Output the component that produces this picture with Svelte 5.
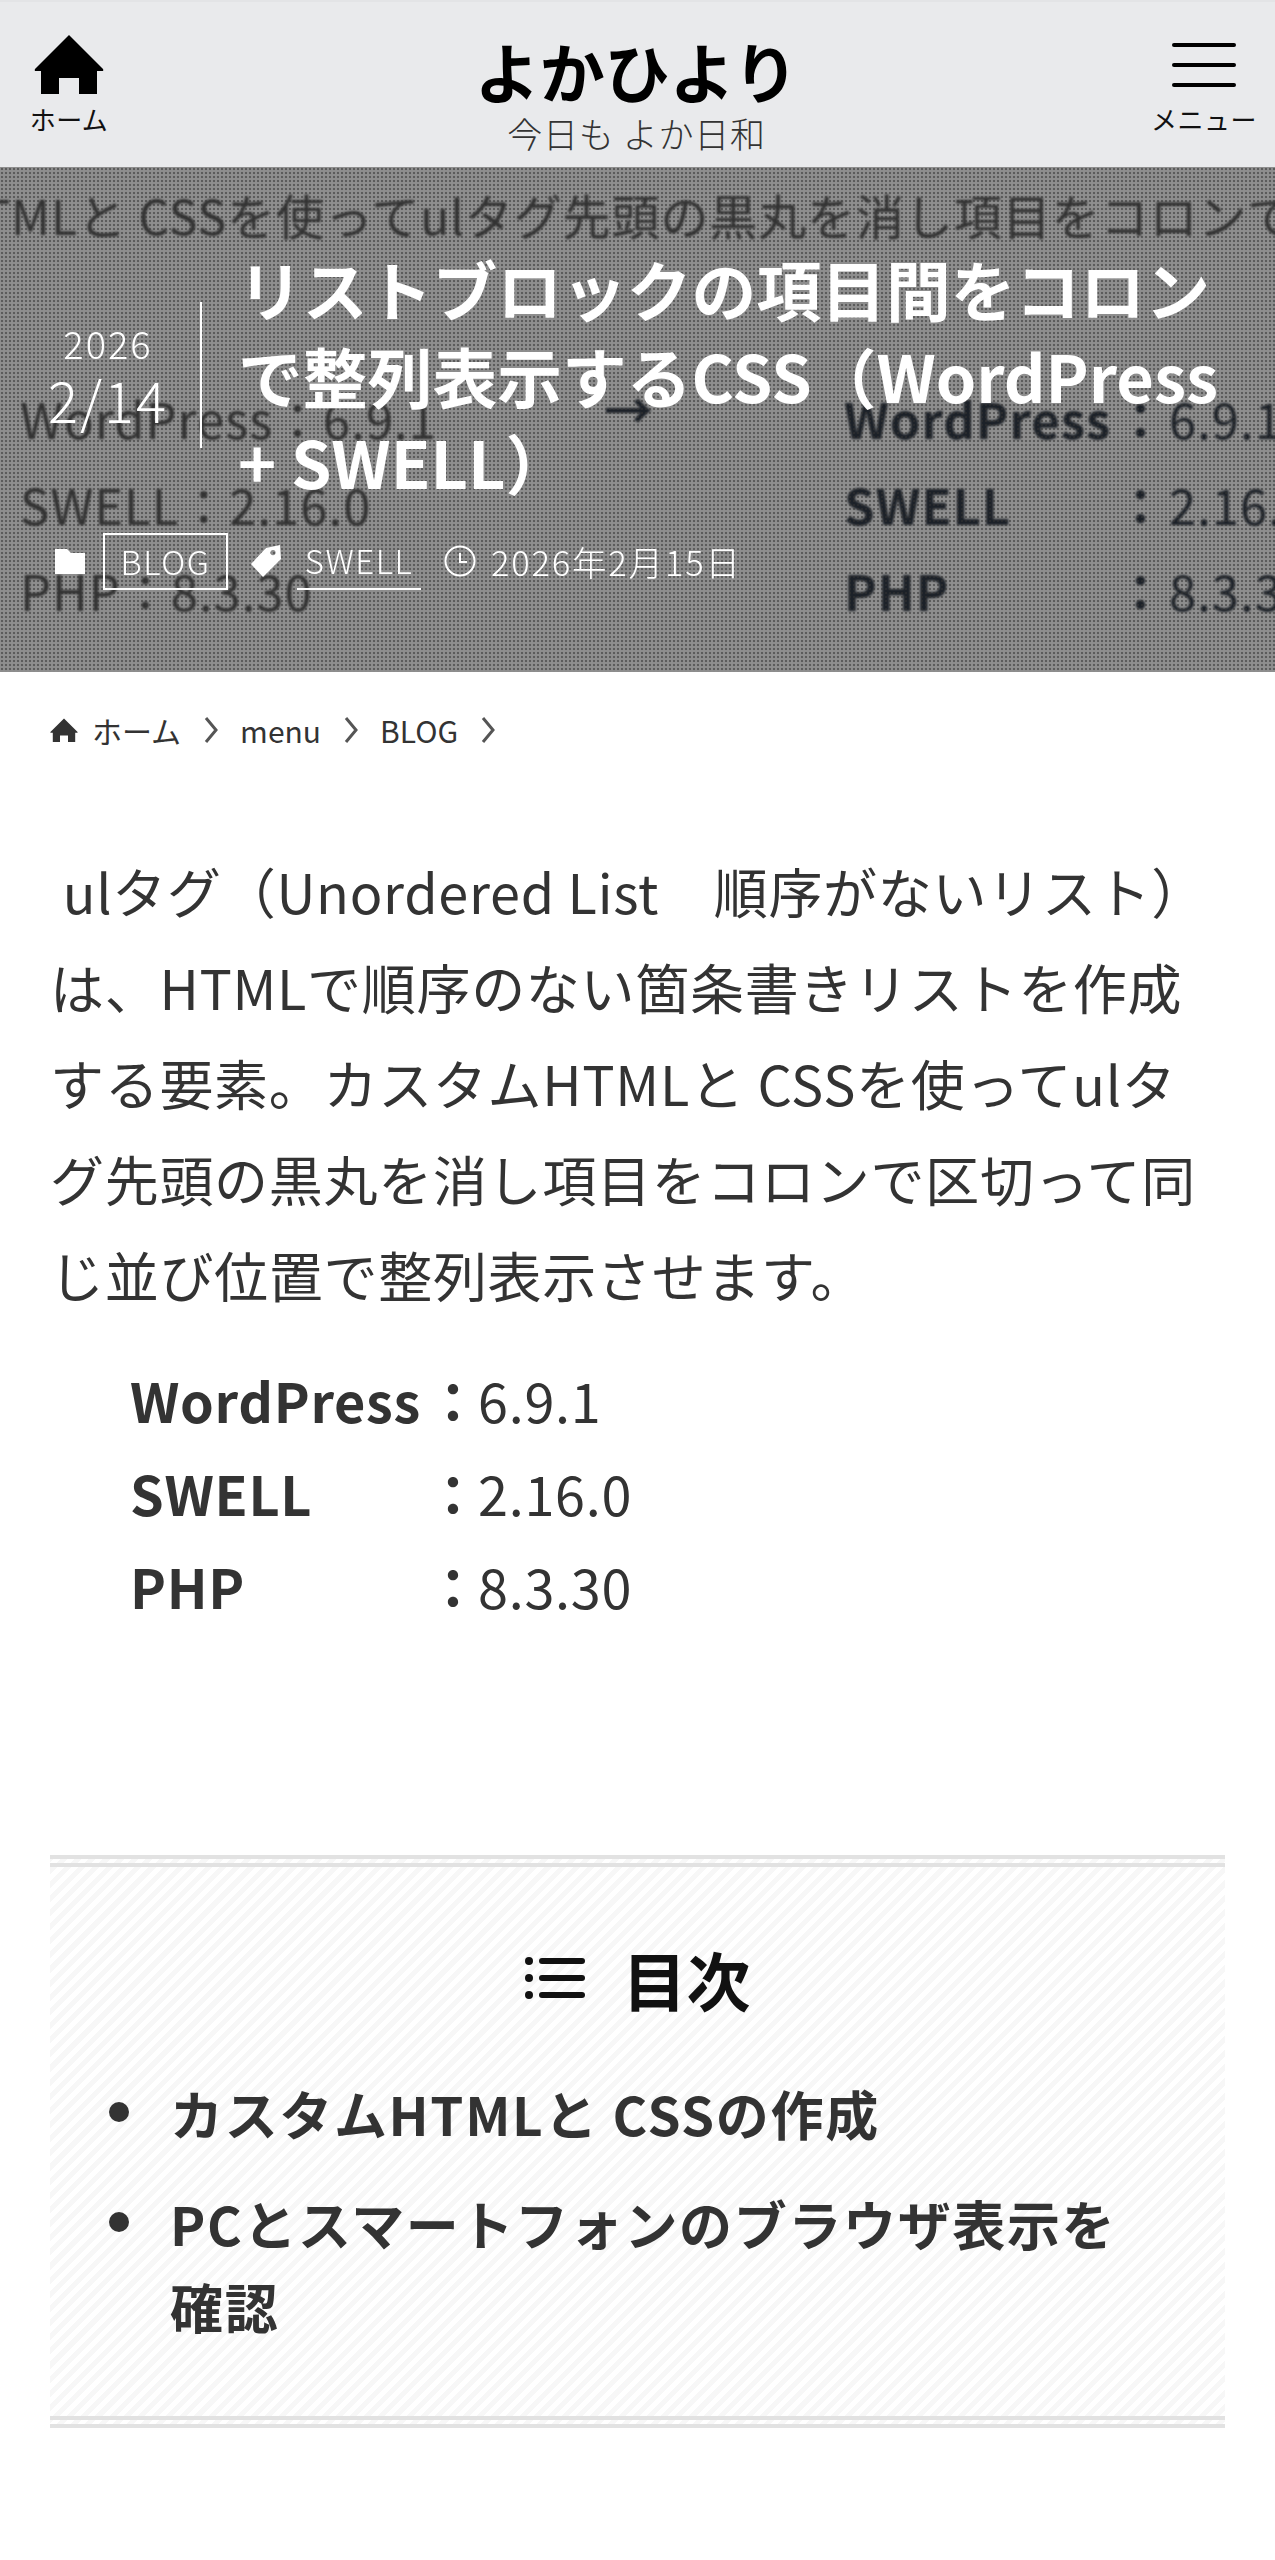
<script>
  const crumbs = ['menu', 'BLOG'];
  const specs = [
    ['WordPress', '6.9.1'],
    ['SWELL', '2.16.0'],
    ['PHP', '8.3.30']
  ];
  const toc = ['カスタムHTMLと CSSの作成', 'PCとスマートフォンのブラウザ表示を確認'];
</script>

<div class="page">
  <header class="site-head">
    <a class="head-btn home">
      <svg class="home-icon" viewBox="0 0 70 60"><path d="M35 1 L69 35 Q70 37 68 37 L63 37 L63 60 L45 60 L45 44 L25 44 L25 60 L7 60 L7 37 L2 37 Q0 37 1 35 Z" /></svg>
      <span>ホーム</span>
    </a>
    <div class="brand">
      <div class="brand-name">よかひより</div>
      <div class="brand-sub">今日も よか日和</div>
    </div>
    <a class="head-btn menu">
      <span class="burger"><i></i><i></i><i></i></span>
      <span>メニュー</span>
    </a>
  </header>

  <section class="hero">
    <div class="hero-shot" aria-hidden="true">
      <div class="shot-line">カスタムHTMLと CSSを使ってulタグ先頭の黒丸を消し項目をコロンで区切って</div>
      <div class="shot-list plain">
        <div>WordPress：6.9.1</div>
        <div>SWELL：2.16.0</div>
        <div>PHP：8.3.30</div>
      </div>
      <div class="shot-arrow">→</div>
      <div class="shot-list table">
        {#each specs as [k, v]}
          <div class="shot-row"><b>{k}</b><span class="shot-colon">：</span><span>{v}</span></div>
        {/each}
      </div>
    </div>
    <div class="hero-body">
      <div class="hero-main">
        <div class="date">
          <div class="year">2026</div>
          <div class="day">2/14</div>
        </div>
        <h1>リストブロックの項目間をコロンで整列表示するCSS（WordPress + SWELL）</h1>
      </div>
      <div class="meta">
        <svg class="folder" viewBox="0 0 30 25"><path d="M0 0 H12 L16 4 H30 V25 H0 Z" /></svg>
        <a class="cat">BLOG</a>
        <svg class="tag" viewBox="0 0 30 32"><path d="M15 3 L29 0 L30 14 L12 32 L0 19 Z M22 5 a2.6 2.6 0 1 0 .01 0 Z" fill-rule="evenodd" /></svg>
        <a class="tagname">SWELL</a>
        <svg class="clock" viewBox="0 0 32 32"><circle cx="16" cy="16" r="14.5" /><path d="M16 8 V17 H23" /></svg>
        <span class="pub">2026年2月15日</span>
      </div>
    </div>
  </section>

  <nav class="crumbs">
    <svg class="crumb-home" viewBox="0 0 70 60"><path d="M35 1 L69 35 Q70 37 68 37 L63 37 L63 60 L45 60 L45 44 L25 44 L25 60 L7 60 L7 37 L2 37 Q0 37 1 35 Z" /></svg>
    <span>ホーム</span>
    <svg class="chev" viewBox="0 0 14 28"><path d="M2 2 L12 14 L2 26" /></svg>
    {#each crumbs as c}
      <span>{c}</span>
      <svg class="chev" viewBox="0 0 14 28"><path d="M2 2 L12 14 L2 26" /></svg>
    {/each}
  </nav>

  <main class="content">
    <p class="lead">&nbsp;ulタグ（Unordered List　順序がないリスト）は、HTMLで順序のない箇条書きリストを作成する要素。カスタムHTMLと CSSを使ってulタグ先頭の黒丸を消し項目をコロンで区切って同じ並び位置で整列表示させます。</p>

    <ul class="specs">
      {#each specs as [k, v]}
        <li><b>{k}</b><span class="colon">：</span><span>{v}</span></li>
      {/each}
    </ul>

    <div class="toc">
      <div class="toc-title">
        <svg viewBox="0 0 60 44"><circle cx="4" cy="5" r="4" /><circle cx="4" cy="22" r="4" /><circle cx="4" cy="39" r="4" /><rect x="14" y="2" width="46" height="6" rx="3" /><rect x="14" y="19" width="46" height="6" rx="3" /><rect x="14" y="36" width="46" height="6" rx="3" /></svg>
        <span>目次</span>
      </div>
      <ul>
        {#each toc as item}
          <li>{item}</li>
        {/each}
      </ul>
    </div>
  </main>
</div>

<style>
  :global(body) {
    margin: 0;
    background: #fff;
    font-family: "Noto Sans CJK JP", "Noto Sans", sans-serif;
    color: #333;
  }

  .page {
    width: 1275px;
    overflow: hidden;
  }

  .site-head {
    height: 167px;
    box-sizing: border-box;
    background: #e9eaec;
    border-top: 2px solid #e3e4e6;
    display: flex;
    justify-content: space-between;
    align-items: flex-start;
  }

  .head-btn {
    display: flex;
    flex-direction: column;
    align-items: center;
    color: #111;
    font-size: 26px;
    letter-spacing: 0.5px;
    line-height: 1;
    width: 130px;
  }

  .head-btn span:last-child {
    white-space: nowrap;
  }

  .home {
    padding-top: 32px;
    margin-left: 4px;
  }

  .home-icon {
    width: 70px;
    height: 60px;
    fill: #000;
    margin-bottom: 12px;
  }

  .menu {
    padding-top: 41px;
    margin-right: 6px;
  }

  .burger {
    display: flex;
    flex-direction: column;
    gap: 16px;
    margin-bottom: 19px;
  }

  .burger i {
    display: block;
    width: 64px;
    height: 4px;
    border-radius: 2px;
    background: #000;
  }

  .brand {
    text-align: center;
    padding-top: 27px;
  }

  .brand-name {
    font-size: 65px;
    font-weight: 700;
    line-height: 82px;
    color: #000;
  }

  .brand-sub {
    font-size: 35px;
    font-weight: 300;
    letter-spacing: 0.7px;
    line-height: 44px;
    color: #333;
  }

  .hero {
    position: relative;
    height: 505px;
    background: #8e8e8e;
    overflow: hidden;
  }

  .hero-shot {
    position: absolute;
    inset: 0;
    color: #1c2128;
    font-size: 49px;
    filter: blur(1.2px);
  }

  .shot-line {
    position: absolute;
    left: -250px;
    top: 15px;
    white-space: nowrap;
    line-height: 64px;
    font-size: 48px;
    letter-spacing: 0.9px;
    color: #333;
  }

  .shot-list {
    position: absolute;
    top: 208px;
    line-height: 86px;
    white-space: nowrap;
    letter-spacing: 1px;
  }

  .plain {
    left: 20px;
    color: #333;
  }

  .table {
    left: 844px;
  }

  .shot-row {
    display: flex;
  }

  .shot-row b {
    width: 272px;
  }

  .shot-colon {
    font-weight: 700;
    width: 53px;
  }

  .shot-arrow {
    position: absolute;
    left: 604px;
    top: 198px;
    font-weight: 700;
    line-height: 86px;
  }

  .hero::after {
    content: '';
    position: absolute;
    inset: 0;
    background-image: radial-gradient(circle at 2px 2px, rgba(50, 50, 50, 0.55) 1.1px, transparent 1.6px);
    background-size: 4px 4px;
  }

  .hero-body {
    position: relative;
    z-index: 1;
    padding: 78px 30px 0 16px;
    color: #fff;
  }

  .hero-main {
    display: flex;
    align-items: center;
  }

  .date {
    width: 184px;
    height: 146px;
    flex: none;
    text-align: center;
    border-right: 2px solid #fff;
    font-weight: 300;
  }

  .year {
    font-size: 38px;
    letter-spacing: 2px;
    line-height: 50px;
    margin-top: 16px;
  }

  .day {
    font-size: 56px;
    letter-spacing: 2px;
    line-height: 62px;
  }

  h1 {
    margin: 0;
    font-size: 64.8px;
    line-height: 86.5px;
    font-weight: 700;
    padding-left: 36px;
  }

  .meta {
    display: flex;
    align-items: center;
    font-size: 33px;
    letter-spacing: 1.5px;
    font-weight: 300;
    margin-top: 28px;
    padding-left: 39px;
  }

  .folder {
    width: 30px;
    height: 25px;
    fill: #fff;
    margin-right: 18px;
  }

  .cat {
    width: 125px;
    box-sizing: border-box;
    text-align: center;
    border: 2px solid #fff;
    line-height: 53px;
    margin-right: 23px;
  }

  .tag {
    width: 30px;
    height: 32px;
    fill: #fff;
    margin-right: 16px;
  }

  .tagname {
    width: 124px;
    box-sizing: border-box;
    text-align: center;
    border-bottom: 2px solid #fff;
    line-height: 55px;
    margin-right: 23px;
  }

  .clock {
    width: 32px;
    height: 32px;
    fill: none;
    stroke: #fff;
    stroke-width: 2;
    margin-right: 15px;
  }

  .pub {
    font-size: 34.5px;
    letter-spacing: 1.8px;
  }

  .crumbs {
    display: flex;
    align-items: center;
    padding: 0 50px;
    height: 116px;
    font-size: 30px;
    color: #333;
  }

  .crumb-home {
    width: 28px;
    height: 24px;
    fill: #333;
    margin-right: 14px;
  }

  .chev {
    width: 14px;
    height: 28px;
    fill: none;
    stroke: #555;
    stroke-width: 3;
    margin: 0 22px 0 23px;
  }

  .content {
    padding: 0 50px;
  }

  .lead {
    margin: 0;
    padding-top: 55px;
    font-size: 54px;
    letter-spacing: 0.7px;
    line-height: 96px;
    font-weight: 400;
    color: #333;
  }

  .specs {
    list-style: none;
    margin: 30px 0 0;
    padding: 0 0 0 80px;
    font-size: 54px;
    letter-spacing: 0.7px;
    line-height: 93px;
    font-weight: 400;
  }

  .specs li {
    display: flex;
  }

  .specs b {
    width: 296px;
    font-weight: 700;
  }

  .colon {
    font-weight: 700;
    width: 52px;
  }

  .toc {
    margin-top: 223px;
    height: 573px;
    box-sizing: border-box;
    border-top: 12px double #e2e2e2;
    border-bottom: 12px double #e2e2e2;
    background: repeating-linear-gradient(135deg, #f7f7f7 0, #f7f7f7 5px, #fff 5px, #fff 10px);
    padding-top: 63px;
  }

  .toc-title {
    display: flex;
    justify-content: center;
    align-items: center;
    gap: 38px;
    font-size: 64px;
    font-weight: 700;
    line-height: 96px;
    color: #111;
  }

  .toc-title svg {
    width: 60px;
    height: 44px;
    fill: #111;
  }

  .toc ul {
    margin: 46px 0 0;
    padding: 0 90px 0 120px;
    list-style: none;
  }

  .toc li {
    position: relative;
    font-size: 53px;
    letter-spacing: 1.65px;
    font-weight: 700;
    line-height: 83px;
    margin-bottom: 27px;
  }

  .toc li::before {
    content: '';
    position: absolute;
    left: -61px;
    top: 30px;
    width: 20px;
    height: 20px;
    border-radius: 50%;
    background: #333;
  }
</style>
